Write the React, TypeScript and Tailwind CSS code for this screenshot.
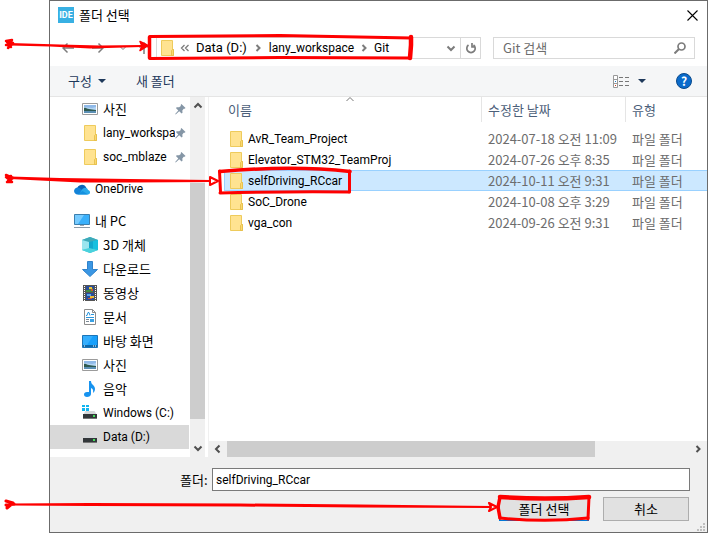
import type { ReactNode } from 'react';

type IconProps = { className?: string };

function Folder({ className = 'w-[13px]' }: IconProps) {
  return (
    <svg className={'h-4 shrink-0 ' + className} viewBox="0 0 13 16" aria-hidden="true">
      <path d="M.5.5h11v9h1v6H.5z" fill="#ffe391" stroke="#eecb5c" />
      <path d="M10.500 15v-4.500l1-1h1v6h-2z" fill="#fbd96e" stroke="#e3bb48" strokeWidth=".8" />
    </svg>
  );
}

function Picture() {
  return (
    <svg className="h-4 w-4 shrink-0" viewBox="0 0 16 16" aria-hidden="true">
      <path d="M.5 2.500h15v11H.5z" fill="#fff" stroke="#9b9b9b" />
      <path d="M2 4h12v8H2z" fill="#b5d6f4" />
      <path d="M2 4h12v2l-4 1-8-1z" fill="#8fb9e8" />
      <path d="M2 7c2-1 3 1 5 1s4 1 7 1v1H2z" fill="#2f5a50" />
      <path d="M2 10h12v2H2z" fill="#5b8fb4" />
    </svg>
  );
}

function Cloud() {
  return (
    <svg className="h-4 w-4 shrink-0" viewBox="0 0 16 16" aria-hidden="true">
      <path d="M3 8a5 5 0 0 1 9-2l1 3-8 3z" fill="#0a64b8" />
      <path d="M4 13.500a3.500 3.500 0 1 1 1.500-6.400L12 12z" fill="#1383d8" />
      <path d="M8 8.500c2-3 6-2 6 .500 3 .5 2.500 4.500 0 4.500H5z" fill="#28a8ea" />
      <path d="M8.500 10 14 13.500H3.500z" fill="#1490df" />
    </svg>
  );
}

function Pc() {
  return (
    <svg className="h-4 w-4 shrink-0" viewBox="0 0 16 16" aria-hidden="true">
      <path d="M.5 1.500h15v10H.5z" fill="#39b0fb" stroke="#3b7fae" />
      <path d="M1 2h9L4 11H1z" fill="#76cbff" />
      <path d="M6 12h4v1H6z" fill="#9aa7b2" />
      <path d="M0 14h16v1H0z" fill="#8c9ba8" />
    </svg>
  );
}

function Cube() {
  return (
    <svg className="h-4 w-4 shrink-0" viewBox="0 0 16 16" aria-hidden="true">
      <path d="M8 0l8 3v10l-8 3-8-3V3z" fill="#2fc0d4" />
      <path d="M0 3l8-3 8 3-8 3z" fill="#3ea9b8" />
      <path d="M0 3l7 2v7l-7 1z" fill="#9be5ee" />
      <path d="M7 5l9-2v10l-9-1z" fill="#10a8cd" />
      <path d="M11 4l5-1v10l-5-1z" fill="#16c0df" />
      <path d="M0 13l7-2 9 2-8 3z" fill="#4ad2dd" />
    </svg>
  );
}

function Download() {
  return (
    <svg className="h-4 w-4 shrink-0" viewBox="0 0 16 16" aria-hidden="true">
      <path d="M5.500.5h5v8h5L8 15.500.5 8.500h5z" fill="#3b97e4" stroke="#3083cb" />
    </svg>
  );
}

function Film() {
  return (
    <svg className="h-4 w-4 shrink-0" viewBox="0 0 16 16" aria-hidden="true">
      <path d="M1 0h14v16H1z" fill="#555" />
      <path d="M4 1h8v6H4zM4 8h8v7H4z" fill="#284c9b" />
      <path d="M4 5h3V3h4v4H4z" fill="#3f8a44" />
      <path d="M7 2h3v2H7zM8 11h4v2H8z" fill="#ecc03b" />
      <path d="M5 9h4v2H5z" fill="#5aa5ec" />
      <path d="M9 4h2v2H9zM6 13h4v1H6z" fill="#d2522c" />
      <path d="M2.500 1v15M13.500 1v15" stroke="#fff" strokeDasharray="1 1" />
    </svg>
  );
}

function Doc() {
  return (
    <svg className="h-4 w-4 shrink-0" viewBox="0 0 16 16" aria-hidden="true">
      <path d="M2.500.5h8l3 3v12h-11z" fill="#fff" stroke="#8c8c8c" />
      <path d="M10.500.5v3h3" fill="none" stroke="#8c8c8c" />
      <path d="M4 6.500h1l1-3h1l1 3M9 5.500h3M4 8.500h8" fill="none" stroke="#2895dd" />
      <path d="M4 10.500h3M4 12.500h3" stroke="#7d8a96" />
      <path d="M8 10h4v3H8z" fill="#3aa1e3" />
    </svg>
  );
}

function Desktop() {
  return (
    <svg className="h-4 w-4 shrink-0" viewBox="0 0 16 16" aria-hidden="true">
      <path d="M.5 2.500h15v12H.5z" fill="#18a0fb" stroke="#1b75b8" />
      <path d="M1 3h10L5 12H1z" fill="#35aefd" />
      <path d="M1 12h14v2H1z" fill="#0c68ab" />
      <path d="M2 13h1M11 13h1M13 13h1" stroke="#fff" />
    </svg>
  );
}

function Music() {
  return (
    <svg className="h-4 w-4 shrink-0" viewBox="0 0 16 16" aria-hidden="true">
      <path d="M7 0h2c0 4 4 4 4 8 0 2-1 3-2 4 .500-3 0-4-2-5v6c0 2-2 3-4 3-4 0-4-5 0-5h2z" fill="#1793ef" />
    </svg>
  );
}

function Drive({ windows = false }: { windows?: boolean }) {
  return (
    <svg className="h-4 w-4 shrink-0" viewBox="0 0 16 16" aria-hidden="true">
      {windows && <path d="M0 0h3v2H0zM4 0h3v2H4zM0 3h3v3H0zM4 3h3v3H4z" fill="#10b5f0" />}
      <path d="M3.500 6h9l2.500 4H1z" fill="#d5d8da" />
      <path d="M1 9h14v5H1z" fill="#33373a" />
      <path d="M1 13h14v1H1z" fill="#777" />
      <path d="M11 10h2v2h-2z" fill="#45e05b" />
    </svg>
  );
}

function Pin() {
  return (
    <svg className="h-3 w-[11px] shrink-0" viewBox="0 0 12 12" aria-label="고정됨">
      <path d="M7 .5 11.500 5l-1 .8-1-.2-1.500 1.900.2 2.500-1 1L4.600 8.400.8 12l-.6-.6 3.400-3.800L1 5l1-1 2.500.2L6.400 2.700 6.200 1.500z" fill="#8596a6" />
    </svg>
  );
}

function Chevron({ dir, className = '' }: { dir: 'up' | 'down' | 'left' | 'right'; className?: string }) {
  const d = {
    up: 'M1.500 6.500 5 3l3.500 3.500',
    down: 'M1.500 3.500 5 7l3.500-3.500',
    left: 'M6.500 1.500 3 5l3.500 3.500',
    right: 'M3.500 2 6.500 5l-3 3',
  }[dir];
  return (
    <svg className={'h-[10px] w-[10px] shrink-0 ' + className} viewBox="0 0 10 10" aria-hidden="true">
      <path d={d} fill="none" stroke="currentColor" strokeWidth="2" />
    </svg>
  );
}

function Caret() {
  return (
    <svg className="h-1 w-2" viewBox="0 0 8 4" aria-hidden="true">
      <path d="M0 0h8L4 4z" fill="#1e395b" />
    </svg>
  );
}

function Arrow({ d }: { d: string }) {
  return (
    <svg className="h-3 w-3" viewBox="0 0 12 12" aria-hidden="true">
      <path d={d} fill="none" stroke="currentColor" strokeWidth="1.500" />
    </svg>
  );
}

type PlaceProps = { icon: ReactNode; label: string; pinned?: boolean; root?: boolean; selected?: boolean; latin?: boolean };

function Place({ icon, label, pinned, root, selected, latin }: PlaceProps) {
  return (
    <li className={root ? 'mt-2' : ''}>
      <button className={'flex h-6 w-full items-center pr-[3px] text-left ' + (root ? 'pl-6 ' : 'pl-8 ') + (selected ? 'bg-[#d9d9d9]' : '')}>
        <span className="flex w-4 shrink-0 justify-center">{icon}</span>
        <span className={'ml-[5px] min-w-0 flex-1 overflow-hidden leading-[22px] whitespace-nowrap ' + (latin ? "font-['Roboto',sans-serif] text-[12px]" : '')}>{label}</span>
        {pinned && <Pin />}
      </button>
    </li>
  );
}

const files = [
  { name: 'AvR_Team_Project', date: '2024-07-18 오전 11:09' },
  { name: 'Elevator_STM32_TeamProj', date: '2024-07-26 오후 8:35' },
  { name: 'selfDriving_RCcar', date: '2024-10-11 오전 9:31', selected: true },
  { name: 'SoC_Drone', date: '2024-10-08 오후 3:29' },
  { name: 'vga_con', date: '2024-09-26 오전 9:31' },
];

function Annotations() {
  return (
    <svg className="pointer-events-none absolute top-0 left-0 h-[533px] w-[708px]" viewBox="0 0 708 533" aria-hidden="true">
      <g fill="none" stroke="#fe0000" strokeLinejoin="round" strokeLinecap="round">
        <path d="M150 36.500 L280 35.500 411 38" strokeWidth="3" />
        <path d="M411 37 L411 45 410 58" strokeWidth="4.500" />
        <path d="M150 58.500 L280 57.500 410 58" strokeWidth="3" />
        <path d="M149.500 37v21" strokeWidth="3.500" />
        <path d="M6 41l6-1-4 8 5-5-6-1 4 5M6 45l7-1" strokeWidth="2.500" />
        <path d="M140 41.500l8 4-8 5 2-4.500z" strokeWidth="1.500" fill="#fe0000" />

        <path d="M220 171.500 C260 168 310 167 350 171.500" strokeWidth="3.500" />
        <path d="M349.500 171v21" strokeWidth="3" />
        <path d="M220 193 C260 192 300 191 349 192" strokeWidth="3" />
        <path d="M219.500 171l1 21" strokeWidth="3" />
        <path d="M6 175l7 3-6 4 5 0-6-5 5-1-3 5 5-3" strokeWidth="2.500" />
        <path d="M210 177l8 4-8 4z" strokeWidth="2" />

        <path d="M500 497 C530 499 560 499 589 497" strokeWidth="4.500" />
        <path d="M589 497l-1 22" strokeWidth="3" />
        <path d="M500 518 C530 521 560 521 588 518" strokeWidth="3" />
        <path d="M500 497l-2 10 2 11" strokeWidth="3.500" />
        <path d="M6 501l7 2-6 5 3-6M6 505l8-1" strokeWidth="3" />
        <path d="M489 503l8 4-8 4 2-4z" strokeWidth="2" />
      </g>
      <g fill="#fe0000">
        <path d="M10 43 L60 44.500 100 45.500 142 45 142 47 90 48.500 50 46.500 10 45.500z" />
        <path d="M10 176.500 L60 178 130 179 211 180 211 182 130 182.500 80 182.500 40 180.500 10 179z" />
        <path d="M10 503.500 L90 503 240 503.500 360 504.500 491 506 491 508 360 507.500 240 506.500 90 506 10 505.500z" />
      </g>
    </svg>
  );
}

export default function App() {
  return (
    <div className="relative bg-white pl-[49px] font-['Noto_Sans_CJK_KR',sans-serif] text-[13px] leading-4 text-black">
      <main className="border border-[#6b6b6b] bg-white">
        <header className="flex h-7 items-center gap-[5px] pr-[9px] pl-2">
          <span className="flex h-4 w-4 items-center justify-center bg-[#38b0e3] font-['Roboto',sans-serif] text-[9px] font-bold text-white">IDE</span>
          <h1 className="flex-1">폴더 선택</h1>
          <button aria-label="닫기">
            <svg className="h-[11px] w-[11px]" viewBox="0 0 11 11" aria-hidden="true">
              <path d="M.5.5l10 10M10.500.5l-10 10" stroke="#000" strokeWidth="1.100" />
            </svg>
          </button>
        </header>

        <nav className="flex h-[37px] items-center pr-3 pl-3 text-[#7c7c7c]" aria-label="탐색">
          <button aria-label="뒤로" className="w-[30px]"><Arrow d="M12 6H1M5.500 1.500 1 6l4.500 4.500" /></button>
          <button aria-label="앞으로" className="w-[26px]"><Arrow d="M0 6h11M6.500 1.500 11 6l-4.500 4.500" /></button>
          <button aria-label="최근 위치" className="w-5">
            <svg className="h-[10px] w-[10px]" viewBox="0 0 10 10" aria-hidden="true">
              <path d="M2 3.500 5 6.500l3-3" fill="none" stroke="currentColor" />
            </svg>
          </button>
          <button aria-label="위로" className="w-[18px]"><Arrow d="M6 12V1M1.500 5.500 6 1l4.500 4.500" /></button>
          <div className="flex h-[22px] flex-1 items-center border border-[#d9d9d9] pl-1 font-['Roboto',sans-serif] text-[12px]">
            <Folder />
            <svg className="mx-[6px] h-[10px] w-[10px]" viewBox="0 0 10 10" aria-hidden="true">
              <path d="M4.500 2 1.500 5l3 3M8.500 2l-3 3 3 3" fill="none" stroke="currentColor" strokeWidth="1.300" />
            </svg>
            <button className="text-[13px] text-black">Data (D:)</button>
            <Chevron dir="right" className="mx-[6px]" />
            <button className="text-black">lany_workspace</button>
            <Chevron dir="right" className="mx-[5px]" />
            <button className="text-black">Git</button>
            <button aria-label="이전 위치" className="ml-auto px-1"><Chevron dir="down" /></button>
            <button aria-label="새로 고침" className="flex h-5 w-5 items-center justify-center border-l border-[#d9d9d9]">
              <svg className="h-3 w-3" viewBox="0 0 12 12" aria-hidden="true">
                <path d="M8.500 3a4.200 4.200 0 1 1-5 0M5 1v4H1.500" fill="none" stroke="currentColor" strokeWidth="1.700" transform="matrix(-1 0 0 1 12 0)" />
              </svg>
            </button>
          </div>
          <div className="ml-3 flex h-[22px] w-[202px] items-center border border-[#d9d9d9] pr-2 pl-[9px]">
            <input aria-label="Git 검색" placeholder="Git 검색" className="min-w-0 flex-1 outline-none placeholder:text-[#6d6d6d]" />
            <svg className="h-3 w-3" viewBox="0 0 12 12" aria-hidden="true">
              <circle cx="7.500" cy="4.500" r="3.500" fill="none" stroke="currentColor" strokeWidth="1.700" />
              <path d="M5 7 .5 11.500" stroke="currentColor" strokeWidth="2" />
            </svg>
          </div>
        </nav>

        <div className="flex h-[31px] items-center border-b border-[#e5e5e5] bg-[#f5f6f7] pr-[15px] pl-[18px] text-[#1e395b]">
          <button className="flex items-center gap-[6px]">구성 <Caret /></button>
          <button className="ml-[30px]">새 폴더</button>
          <button aria-label="보기" className="ml-auto flex items-center gap-[9px]">
            <svg className="h-[13px] w-4" viewBox="0 0 16 13" aria-hidden="true">
              <path d="M.5.5h4v12h-4zM.5 4.500h4M.5 8.500h4" fill="#fff" stroke="#999" />
              <path d="M6 2.500h4M12 2.500h4M6 6.500h4M12 6.500h4M6 10.500h4M12 10.500h4" stroke="#777" />
              <path d="M2 6h1v1H2z" fill="#1b7fd0" />
              <path d="M2 10h1v1H2z" fill="#d23c1b" />
            </svg>
            <Caret />
          </button>
          <button aria-label="도움말" className="ml-[30px] h-4 w-4 rounded-full border border-[#0a4a8c] bg-[#0b6bcb] text-[12px] leading-[14px] font-bold text-white">?</button>
        </div>

        <div className="flex h-[360px]">
          <aside className="flex w-[155px] shrink-0">
            <ul className="min-w-0 flex-1">
              <Place icon={<Picture />} label="사진" pinned />
              <Place icon={<Folder />} label="lany_workspace" pinned latin />
              <Place icon={<Folder />} label="soc_mblaze" pinned latin />
              <Place icon={<Cloud />} label="OneDrive" root latin />
              <Place icon={<Pc />} label="내 PC" root />
              <Place icon={<Cube />} label="3D 개체" />
              <Place icon={<Download />} label="다운로드" />
              <Place icon={<Film />} label="동영상" />
              <Place icon={<Doc />} label="문서" />
              <Place icon={<Desktop />} label="바탕 화면" />
              <Place icon={<Picture />} label="사진" />
              <Place icon={<Music />} label="음악" />
              <Place icon={<Drive windows />} label="Windows (C:)" latin />
              <Place icon={<Drive />} label="Data (D:)" selected latin />
            </ul>
            <div className="ml-px flex w-[15px] flex-col items-center bg-[#f0f0f0] text-[#505050]">
              <div className="flex h-[86px] items-start pt-1"><Chevron dir="up" /></div>
              <div className="w-full flex-1 bg-[#cdcdcd]" />
              <div className="flex h-[38px] items-end pb-1"><Chevron dir="down" /></div>
            </div>
          </aside>

          <section className="ml-[3px] flex min-w-0 flex-1 flex-col border-l border-[#f0f0f0]">
            <svg className="ml-[137px] h-1 w-2" viewBox="0 0 8 4" aria-hidden="true">
              <path d="M.5 4 4 .5 7.500 4" fill="none" stroke="#777" />
            </svg>
            <table className="-mt-1 ml-[15px] table-fixed border-separate border-spacing-0 text-[#6d6d6d]">
              <thead className="text-[#4c607a]">
                <tr className="h-[25px] text-left">
                  <th className="w-[258px] border-r border-[#e5e5e5] p-0 pl-1 font-normal">이름</th>
                  <th className="w-[144px] border-r border-[#e5e5e5] p-0 pl-[6px] font-normal">수정한 날짜</th>
                  <th className="p-0 pl-[6px] font-normal">유형</th>
                </tr>
              </thead>
              <tbody>
                <tr className="h-[6px]"><td colSpan={3} className="p-0" /></tr>
                {files.map((f) => {
                  const cell = f.selected ? 'p-0 h-[21px] border-y border-[#99d1ff] bg-[#cce8ff] ' : 'p-0 h-[21px] ';
                  return (
                    <tr key={f.name}>
                      <td className={cell + (f.selected ? 'border-l' : 'border-l border-l-transparent')}>
                        <span className="flex items-center gap-[5px] pl-[5px] font-['Roboto',sans-serif] text-[12px] whitespace-nowrap text-black"><Folder />{f.name}</span>
                      </td>
                      <td className={cell + 'pl-[6px] whitespace-nowrap'}>{f.date}</td>
                      <td className={cell + 'pl-[6px] whitespace-nowrap'}>파일 폴더</td>
                    </tr>
                  );
                })}
              </tbody>
            </table>
            <div className="mt-auto flex h-4 items-center bg-[#f0f0f0] text-[#505050]">
              <Chevron dir="left" className="mx-1" />
              <div className="h-4 w-[368px] bg-[#cdcdcd]" />
              <Chevron dir="right" className="mr-1 ml-auto" />
            </div>
          </section>
        </div>

        <footer className="bg-[#f0f0f0] pt-[11px] pl-[130px]">
          <div className="flex items-center pr-[17px]">
            <label htmlFor="folder" className="w-8">폴더:</label>
            <input id="folder" defaultValue="selfDriving_RCcar" className="h-[23px] min-w-0 flex-1 border border-[#7a7a7a] bg-white px-[3px] font-['Roboto',sans-serif] text-[12px] outline-none" />
          </div>
          <div className="mt-[6px] flex justify-end gap-[14px] pr-[18px]">
            <button className="h-6 w-[90px] border border-[#0078d7] bg-[#e1e1e1]">폴더 선택</button>
            <button className="h-6 w-[86px] border border-[#adadad] bg-[#e1e1e1]">취소</button>
          </div>
          <svg className="mt-[2px] mr-[2px] ml-auto h-[9px] w-[9px]" viewBox="0 0 9 9" aria-hidden="true">
            <path d="M7 0h2v2H7zM7 3h2v2H7zM4 3h2v2H4zM7 6h2v2H7zM4 6h2v2H4zM1 6h2v2H1z" fill="#bfbfbf" />
          </svg>
        </footer>
      </main>
      <Annotations />
    </div>
  );
}
